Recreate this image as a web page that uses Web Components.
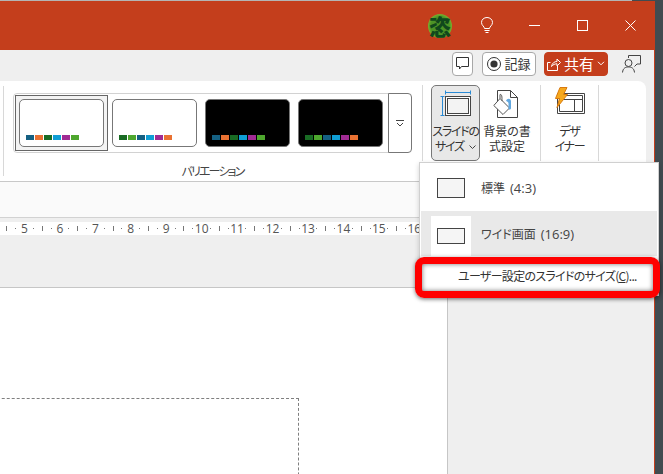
<!doctype html>
<html lang="ja">
<head>
<meta charset="utf-8">
<title>PowerPoint</title>
<style>
  html, body { margin: 0; height: 100%; overflow: hidden; background: #414b50; }
  body { font-family: "Open Sans", "Noto Sans CJK JP", sans-serif; color: #444; }
</style>
</head>
<body>
<ppt-app>
  <ppt-titlebar></ppt-titlebar>
  <ppt-commandbar></ppt-commandbar>
  <ppt-ribbon>
    <ppt-variations slot="variations">
      <ppt-thumb selected colors="156082 e97132 196b24 0f9ed5 a02b93 4ea72e"></ppt-thumb>
      <ppt-thumb colors="196b24 4ea72e 156082 0f9ed5 a02b93 e97132"></ppt-thumb>
      <ppt-thumb dark colors="156082 e97132 196b24 0f9ed5 a02b93 4ea72e"></ppt-thumb>
      <ppt-thumb dark colors="196b24 4ea72e 156082 0f9ed5 a02b93 e97132"></ppt-thumb>
    </ppt-variations>
    <ppt-ribbon-button slot="buttons" active tight width="49" chevron>
      <svg slot="icon" style="margin-top:3px" width="32" height="28" viewBox="0 0 32 28" fill="none">
        <path d="M5.5 3.5H30.5M5.5 1.5V5.5M30.5 1.5V5.5M2.5 7V27M.5 7.5H4.5M.5 26.5H4.5" stroke="#2a8ad4"/>
        <rect x="5.5" y="7.5" width="25" height="19" stroke="#444" fill="#fff"/>
        <rect x="7.5" y="9.5" width="21" height="15" stroke="#444" fill="#f3f3f3"/>
      </svg>
      スライドの<br>サイズ
    </ppt-ribbon-button>
    <ppt-ribbon-button slot="buttons" width="54" style="margin-right:6px">
      <svg slot="icon" style="margin:4px 2px 0 0" width="26" height="28" viewBox="0 0 26 28" fill="none">
        <path d="M4.5 .5H17.5L24.5 7.5V27.5H4.5Z" fill="#fff" stroke="#444"/>
        <path d="M17.5 .5V7.5H24.5" stroke="#444"/>
        <path d="M7 8.5L16.5 18 10 24.5.8 15.5Z" fill="#fff" stroke="#555"/>
        <path d="M7 8.5V4.5M7 4.5C9 4 9 7 9 11" stroke="#555"/>
        <path d="M13 11C14 8 17.5 8 18 11V18.5C17.5 20 15.8 20 15.5 18.5V13C15 11.8 14 11.5 13 11Z" fill="#62a8e0"/>
      </svg>
      背景の書<br>式設定
    </ppt-ribbon-button>
    <ppt-ribbon-sep slot="buttons"></ppt-ribbon-sep>
    <ppt-ribbon-button slot="buttons" tight width="57">
      <svg slot="icon" style="margin-top:1px" width="32" height="28" viewBox="0 0 32 28" fill="none">
        <path d="M3.5 6.5H30.5V26.5H3.5Z" fill="#fff" stroke="#444"/>
        <path d="M5.5 8.5H28.5V24.5H5.5Z" stroke="#444"/>
        <path d="M5.5 12.5H28.5M20.5 12.5V24.5" stroke="#444"/>
        <path d="M6 .5H13L9.5 7.5H13.5L3 20.5 5.5 11.5H1.5Z" fill="#f6a81c" stroke="#d87a10"/>
      </svg>
      デザ<br>イナー
    </ppt-ribbon-button>
    <ppt-ribbon-sep slot="buttons"></ppt-ribbon-sep>
  </ppt-ribbon>
  <ppt-strip></ppt-strip>
  <ppt-ruler from="5" to="16"></ppt-ruler>
  <ppt-workspace></ppt-workspace>
  <ppt-menu>
    <ppt-menu-item boxh="20" jp="標準" en="(4:3)"></ppt-menu-item>
    <ppt-menu-item boxh="16" hover jp="ワイド画面" en="(16:9)"></ppt-menu-item>
    <ppt-menu-custom>ユーザー設定のスライドのサイズ(<u>C</u>)...</ppt-menu-custom>
  </ppt-menu>
</ppt-app>

<script>
  const JP = `"Noto Sans CJK JP", sans-serif`;

  // every element here is only markup + style, so one small helper is enough
  const define = (name, html, setup) => {
    const template = document.createElement("template");
    template.innerHTML = html;
    customElements.define(name, class extends HTMLElement {
      constructor() {
        super();
        this.attachShadow({ mode: "open" });
      }
      connectedCallback() {
        this.shadowRoot.appendChild(template.content.cloneNode(true));
        if (setup) setup(this, this.shadowRoot);
      }
    });
  };

  define("ppt-app", `
    <style>
      :host { display: flex; flex-direction: column; position: relative; width: 654px; height: 473px;
              margin-top: 1px; border-right: 1px solid #c43e1c; background: #efefef; }
      .edge { position: absolute; left: 0; top: -1px; width: 632px; height: 1px; background: #b4b4b4; }
    </style>
    <div class="edge"></div>
    <slot></slot>
  `);

  define("ppt-titlebar", `
    <style>
      :host { display: flex; align-items: center; height: 49px; flex: none; background: #c43e1c; color: #fff; padding-left: 428px; box-sizing: border-box; }
      .avatar { width: 24px; height: 24px; border-radius: 50%; flex: none; margin-right: 29px;
                background: radial-gradient(circle, #4c9426 55%, #a2cc38 85%); color: #10481c;
                font: 900 22px/23px ${JP}; text-align: center; }
      svg { display: block; flex: none; }
      .bulb { margin-right: 36px; }
      .min { margin-right: 37px; }
      .max { margin-right: 37px; }
    </style>
    <div class="avatar">恣</div>
    <svg class="bulb" width="12" height="17" viewBox="0 0 12 17" fill="none" stroke="#fff">
      <path d="M3.5 11.5C3.5 9.5.5 8.5.5 5.5.5 2.5 3 .5 6 .5S11.5 2.5 11.5 5.5C11.5 8.5 8.5 9.5 8.5 11.5Z"/>
      <path d="M3.5 13.5H8.5M4.5 15.5H7.5"/>
    </svg>
    <svg class="min" width="11" height="11" viewBox="0 0 11 11" stroke="#fff"><path d="M0 5.5H11"/></svg>
    <svg class="max" width="11" height="11" viewBox="0 0 11 11" fill="none" stroke="#fff"><rect x=".5" y=".5" width="10" height="10"/></svg>
    <svg width="11" height="11" viewBox="0 0 11 11" stroke="#fff"><path d="M.5 .5L10.5 10.5M10.5 .5L.5 10.5"/></svg>
  `);

  define("ppt-commandbar", `
    <style>
      :host { display: flex; align-items: center; height: 31px; flex: none; padding: 0 0 4px 452px; box-sizing: border-box; background: #efefef; font-size: 14px; font-family: ${JP}; }
      .btn { display: flex; align-items: center; justify-content: center; height: 24px; box-sizing: border-box; background: #fff; border: 1px solid #a8a8a8; border-radius: 4px; flex: none; }
      .comment { width: 21px; margin-right: 9px; }
      .record { width: 54px; margin-right: 8px; gap: 3px; color: #333; font-size: 13px; }
      .share { width: 64px; margin-right: 14px; gap: 3px; background: #c43e1c; border-color: #c43e1c; color: #fff; font-size: 15px; }
      svg { display: block; flex: none; }
    </style>
    <div class="btn comment">
      <svg width="13" height="13" viewBox="0 0 13 13" fill="none" stroke="#333"><path d="M.5 .5H12.5V9.5H5.5L3.5 12V9.5H.5Z"/></svg>
    </div>
    <div class="btn record">
      <svg width="14" height="14" viewBox="0 0 14 14"><circle cx="7" cy="7" r="6.5" fill="none" stroke="#333"/><circle cx="7" cy="7" r="3.6" fill="#333"/></svg>
      <span>記録</span>
    </div>
    <div class="btn share">
      <svg width="14" height="14" viewBox="0 0 14 14" fill="none" stroke="#fff"><path d="M10.5 8.5V13.5H.5V5.5H3.5M4.5 9.5C5 6 7.5 4.5 10 4.5V2L13.5 5.5 10 9V6.8C8 6.8 6 7.5 4.5 9.5Z"/></svg>
      <span>共有</span>
      <svg width="8" height="5" viewBox="0 0 8 5" fill="none" stroke="#fff"><path d="M1 .8L4 3.8 7 .8"/></svg>
    </div>
    <svg width="19" height="18" viewBox="0 0 19 18" fill="none" stroke="#444">
      <path d="M6.5 3V.5H18.5V9H15L12.5 11.5"/>
      <circle cx="6.5" cy="8" r="3.5"/>
      <path d="M.5 17.5C1 13 3.5 12 6.5 12S12 13 12.5 17.5"/>
    </svg>
  `);

  define("ppt-ribbon", `
    <style>
      :host { display: flex; flex: none; height: 101px; box-sizing: border-box; margin-right: 8px; padding-left: 3px; background: #fff; border-bottom: 1px solid #c8c8c8; border-radius: 0 8px 0 0; }
      .buttons { display: flex; align-items: flex-start; padding: 4px 0 0 8px; height: 76px; }
      .sep { width: 1px; height: 90px; margin-top: 5px; background: #d8d8d8; flex: none; }
      .sep2 { width: 1px; height: 76px; margin-top: 4px; background: #d8d8d8; flex: none; }
    </style>
    <div class="sep"></div>
    <slot name="variations"></slot>
    <div class="sep2"></div>
    <div class="buttons"><slot name="buttons"></slot></div>
  `);

  define("ppt-ribbon-sep", `
    <style>:host { display: block; width: 1px; height: 76px; background: #d8d8d8; flex: none; }</style>
  `);

  define("ppt-variations", `
    <style>
      :host { display: flex; flex-direction: column; width: 418px; box-sizing: border-box; padding: 12px 0 0 9px; flex: none; }
      .row { display: flex; }
      .gallery { display: flex; padding: 1px; border: 1px solid #d2d2d2; border-radius: 4px 0 0 4px; }
      .more { width: 24px; height: 60px; box-sizing: border-box; margin-left: -1px; display: flex; align-items: center; justify-content: center; background: #fff; border: 1px solid #777; border-radius: 0 4px 4px 0; }
      .label { width: 399px; text-align: center; margin-top: 10px; font: 12px/16px ${JP}; font-feature-settings: "palt"; letter-spacing: -1.9px; color: #444; }
      svg { display: block; }
    </style>
    <div class="row">
      <div class="gallery"><slot></slot></div>
      <div class="more">
        <svg width="8" height="7" viewBox="0 0 8 7" fill="none" stroke="#444"><path d="M0 .5H8M1 3L4 6 7 3"/></svg>
      </div>
    </div>
    <div class="label">バリエーション</div>
  `);

  define("ppt-thumb", `
    <style>
      :host { display: block; padding: 3px; border: 1px solid transparent; }
      :host([selected]) { border-color: #666; background: #f3f3f3; }
      .slide { width: 85px; height: 48px; box-sizing: border-box; padding: 35px 0 0 6px; background: #fff; border: 1px solid #777; border-radius: 5px; }
      :host([dark]) .slide { background: #000; box-shadow: inset 0 0 0 1px #000; }
      .bars { display: flex; gap: 1px; }
      i { width: 8px; height: 5px; display: block; }
    </style>
    <div class="slide"><div class="bars"></div></div>
  `, (el, root) => {
    const bars = root.querySelector(".bars");
    el.getAttribute("colors").split(" ").forEach((c) => {
      const bar = document.createElement("i");
      bar.style.background = `#${c}`;
      bars.appendChild(bar);
    });
  });

  define("ppt-ribbon-button", `
    <style>
      :host { display: flex; flex-direction: column; align-items: center; box-sizing: border-box; height: 76px; flex: none; border: 1px solid transparent; border-radius: 5px; font: 12px/15px ${JP}; font-feature-settings: "palt"; color: #333; text-align: center; white-space: nowrap; }
      :host([active]) { background: #e8e8e8; border-color: #777; }
      :host([tight]) { letter-spacing: -1.3px; }
      .icon { height: 37px; flex: none; }
      ::slotted(svg) { display: block; }
      .chev { display: none; margin-left: 4px; vertical-align: 2px; }
      :host([chevron]) .chev { display: inline-block; }
    </style>
    <div class="icon"><slot name="icon"></slot></div>
    <div><slot></slot><svg class="chev" width="7" height="4" viewBox="0 0 7 4" fill="none" stroke="#444"><path d="M.5 .5L3.5 3.5 6.5 .5"/></svg></div>
  `, (el) => {
    el.style.width = `${el.getAttribute("width")}px`;
  });

  define("ppt-strip", `
    <style>:host { display: block; flex: none; height: 36px; box-sizing: border-box; background: #fafafa; border-bottom: 1px solid #d2d2d2; }</style>
  `);

  define("ppt-ruler", `
    <style>
      :host { display: flex; flex: none; height: 13px; margin-top: 4px; padding-left: 2.35px; background: #fff; font: 12px/13px "Open Sans", sans-serif; color: #555; }
      span { flex: 0 0 8.8625px; min-width: 0; display: flex; align-items: center; justify-content: center; white-space: nowrap; }
      .tick::before { content: ""; width: 1px; height: 5px; background: #777; }
      .dot::before { content: ""; width: 1px; height: 1px; background: #777; }
    </style>
  `, (el, root) => {
    const cell = (cls, text) => {
      const s = document.createElement("span");
      s.className = cls;
      if (text) s.textContent = text;
      root.appendChild(s);
    };
    cell("tick");
    cell("dot");
    for (let n = +el.getAttribute("from"); n <= +el.getAttribute("to"); n++) {
      cell("num", String(n));
      if (n < +el.getAttribute("to")) {
        cell("dot");
        cell("tick");
        cell("dot");
      }
    }
  });

  define("ppt-workspace", `
    <style>
      :host { display: flex; flex: 1; min-height: 0; margin-top: 52px; overflow: hidden; }
      .slide { position: relative; width: 448px; box-sizing: border-box; flex: none; background: #fff; border-top: 1px solid #c6c6c6; border-right: 1px solid #c6c6c6; }
      .placeholder { position: absolute; right: 148px; top: 110px; width: 400px; height: 120px; border: 1px dashed #7f7f7f; }
    </style>
    <div class="slide"><div class="placeholder"></div></div>
  `);

  define("ppt-menu", `
    <style>
      :host { position: absolute; left: 419px; top: 161px; width: 240px; height: 134px; box-sizing: border-box; padding: 1px; background: #fff; border: 1px solid #d0d0d0; box-shadow: 0 2px 5px rgba(0,0,0,.18); font: 12px/16px ${JP}; color: #444; }
    </style>
    <slot></slot>
  `);

  define("ppt-menu-item", `
    <style>
      :host { display: flex; align-items: center; height: 47px; padding-left: 10px; }
      :host([hover]) { height: 45px; background: #e9e9e9; }
      .well { width: 40px; height: 40px; display: flex; align-items: center; justify-content: center; flex: none; margin-right: 10px; }
      :host([hover]) .well { align-self: flex-end; background: #fff; }
      .box { width: 28px; box-sizing: border-box; background: #f5f5f5; border: 1px solid #444; }
      .text { display: flex; gap: 5px; align-items: baseline; white-space: nowrap; }
      .jp { font-feature-settings: "palt"; }
      .en { font: 13px/16px "Open Sans", sans-serif; }
    </style>
    <div class="well"><div class="box"></div></div>
    <div class="text"><span class="jp"></span><span class="en"></span></div>
  `, (el, root) => {
    root.querySelector(".box").style.height = `${el.getAttribute("boxh")}px`;
    root.querySelector(".jp").textContent = el.getAttribute("jp");
    root.querySelector(".en").textContent = el.getAttribute("en");
  });

  define("ppt-menu-custom", `
    <style>
      :host { display: flex; align-items: center; position: relative; height: 40px; box-sizing: border-box; padding-left: 37px; white-space: nowrap; font-feature-settings: "palt"; letter-spacing: -.7px; color: #333; }
      .mark { position: absolute; left: -6px; top: 1px; width: 245px; height: 41px; box-sizing: border-box; border: 7px solid #f00; border-radius: 9px; box-shadow: 0 1px 4px rgba(0,0,0,.5), inset 0 0 5px rgba(0,0,0,.55); }
    </style>
    <slot></slot>
    <div class="mark"></div>
  `);
</script>
</body>
</html>
